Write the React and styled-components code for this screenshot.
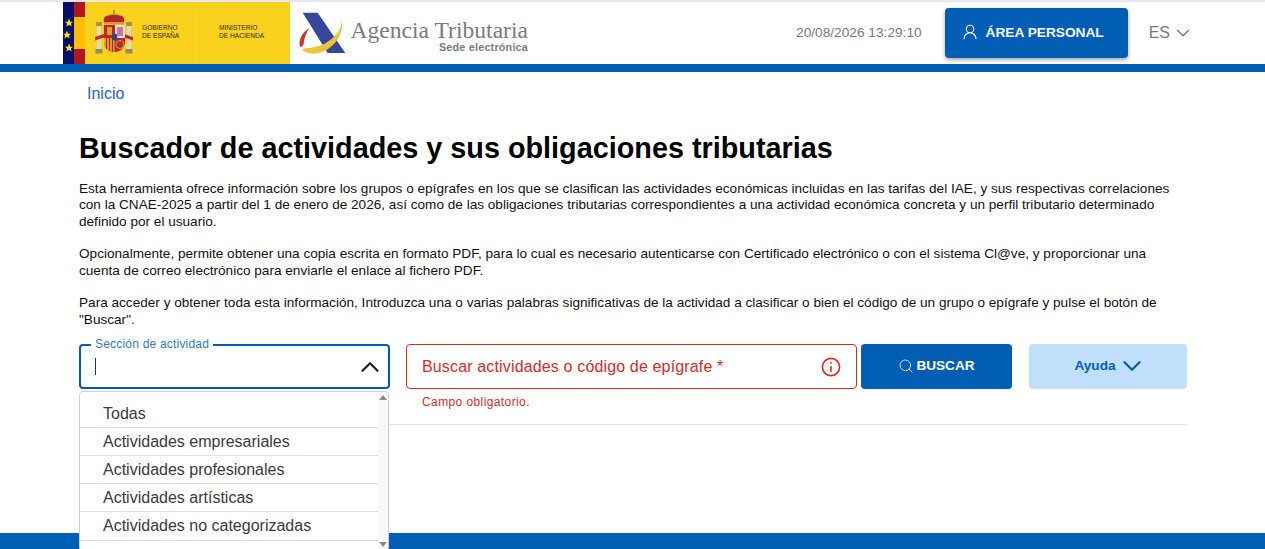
import React from "react";
import styled, { createGlobalStyle } from "styled-components";
import { ChevronDown, ChevronUp, Search, UserRound } from "lucide-react";

const blue = "#005eb5";
const red = "#d92b24";

const GlobalStyle = createGlobalStyle`
  html, body {
    margin: 0;
    padding: 0;
    background: #fff;
    font-family: "Liberation Sans", Arial, sans-serif;
  }
  * { box-sizing: border-box; }
`;

const Page = styled.div`
  height: 549px;
  display: flex;
  flex-direction: column;
  overflow: hidden;
  border-top: 2px solid #eee6ee;
`;
const Header = styled.header`
  height: 70px;
  flex: none;
  display: flex;
  align-items: stretch;
  padding-left: 63px;
  border-bottom: 8px solid ${blue};
`;
const Banner = styled.div`
  width: 227px;
  display: flex;
  background: #f8d21c;
`;
const FlagStrip = styled.svg`
  width: 22px;
  height: 62px;
  flex: none;
`;
const Coat = styled.svg`
  width: 40px;
  height: 44px;
  flex: none;
  margin: 8px 0 0 10px;
`;
const BannerText = styled.div`
  font-size: 6.6px;
  line-height: 8px;
  color: #2f2a10;
  margin-top: 22px;
  margin-left: ${({ $left }) => $left}px;
  width: ${({ $width }) => $width}px;
  flex: none;
`;
const Divider = styled.div`
  width: 1px;
  background: #f3cc28;
  flex: none;
`;
const AgencyMark = styled.svg`
  width: 50px;
  height: 46px;
  flex: none;
  margin: 9px 0 0 8px;
`;
const AgencyText = styled.div`
  margin: 16px 0 0 0;
  width: 180px;
  display: flex;
  flex-direction: column;
  align-items: flex-end;
  color: #7b7b7b;
`;
const AgencyName = styled.div`
  font-family: "Liberation Serif", serif;
  font-size: 23.6px;
  line-height: 24px;
  white-space: nowrap;
`;
const AgencySub = styled.div`
  font-size: 10.8px;
  font-weight: 700;
  line-height: 11px;
  letter-spacing: 0.2px;
  white-space: nowrap;
`;
const Tools = styled.div`
  margin-left: auto;
  display: flex;
  align-items: flex-start;
  padding-right: 71px;
`;
const Clock = styled.div`
  font-size: 13.7px;
  color: #7a7a7a;
  margin-top: 23px;
  margin-right: 23px;
`;
const AreaButton = styled.button`
  width: 183px;
  height: 50px;
  margin-top: 6px;
  display: flex;
  align-items: center;
  justify-content: center;
  gap: 7px;
  padding: 0 8px 2px 0;
  border: none;
  border-radius: 4px;
  background: ${blue};
  color: #fff;
  font: 700 13.7px "Liberation Sans", Arial, sans-serif;
  box-shadow: 0 2px 4px rgba(0, 0, 0, 0.35);
`;
const Lang = styled.div`
  display: flex;
  align-items: center;
  gap: 2px;
  margin: 20px 0 0 21px;
  font-size: 16px;
  color: #757b82;
`;
const Main = styled.main`
  flex: 1;
  min-height: 0;
  padding: 0 78px 0 79px;
`;
const Crumb = styled.a`
  display: block;
  margin: 12px 0 0 8px;
  font-size: 16px;
  line-height: 19px;
  color: #1f62bd;
`;
const Title = styled.h1`
  margin: 27px 0 0;
  font-size: 28.8px;
  line-height: 36px;
  font-weight: 700;
  color: #000;
`;
const Intro = styled.div`
  margin-top: 15px;
  font-size: 13.6px;
  line-height: 16.32px;
  color: #111;
`;
const Para = styled.p`
  margin: 0 0 16.32px;
`;
const FormRow = styled.div`
  display: flex;
  align-items: flex-start;
  margin-top: 9px;
`;
const SelectWrap = styled.div`
  position: relative;
  width: 311px;
  margin-right: 16px;
  flex: none;
`;
const SelectBox = styled.div`
  height: 45px;
  border: 2px solid ${blue};
  border-radius: 4px;
  display: flex;
  align-items: center;
  justify-content: space-between;
  padding: 0 3px 0 14px;
`;
const Caret = styled.span`
  width: 1px;
  height: 17px;
  background: #123a66;
`;
const Legend = styled.span`
  position: absolute;
  top: -7px;
  left: 12px;
  padding: 0 4px;
  background: #fff;
  font-size: 12px;
  line-height: 14px;
  letter-spacing: 0.2px;
  color: #2f7cc4;
`;
const Menu = styled.ul`
  position: absolute;
  top: 47px;
  left: 0;
  width: 310px;
  height: 160px;
  margin: 0;
  padding: 7.6px 10px 0 0;
  list-style: none;
  background: #fff;
  border: 1px solid #d0d0d4;
  border-radius: 4px;
  z-index: 2;
  overflow: hidden;
`;
const MenuItem = styled.li`
  height: 28.2px;
  padding-left: 23px;
  font-size: 16px;
  line-height: 27px;
  color: #3a3a3a;
  border-bottom: 1px solid #dcdce0;
  white-space: nowrap;
`;
const ScrollTrack = styled.div`
  position: absolute;
  top: 0;
  right: 0;
  bottom: 0;
  width: 10px;
  background: #f8f8f8;
`;
const ScrollArrow = styled.span`
  position: absolute;
  left: 1px;
  ${({ $down }) => ($down ? "bottom: 3px;" : "top: 3px;")}
  border-left: 4px solid transparent;
  border-right: 4px solid transparent;
  ${({ $down }) =>
    $down ? "border-top: 5px solid #8a8a8a;" : "border-bottom: 5px solid #8a8a8a;"}
`;
const SearchCol = styled.div`
  width: 451px;
  margin-right: 4px;
  flex: none;
`;
const SearchBox = styled.div`
  height: 45px;
  border: 1px solid ${red};
  border-radius: 4px;
  display: flex;
  align-items: center;
  justify-content: space-between;
  padding: 0 15px;
  font-size: 16px;
  letter-spacing: 0.15px;
  color: ${red};
`;
const ErrorText = styled.div`
  margin: 6px 0 0 16px;
  font-size: 12px;
  line-height: 14px;
  letter-spacing: 0.4px;
  color: ${red};
`;
const Btn = styled.button`
  width: ${({ $w }) => $w}px;
  height: 45px;
  flex: none;
  display: flex;
  align-items: center;
  justify-content: center;
  gap: ${({ $gap }) => $gap}px;
  padding: 0 0 2px ${({ $pl }) => $pl || 0}px;
  border: none;
  border-radius: 4px;
  background: ${({ $light }) => ($light ? "#c0dffb" : blue)};
  color: ${({ $light }) => ($light ? blue : "#fff")};
  font: 700 13.6px "Liberation Sans", Arial, sans-serif;
  margin-left: ${({ $ml }) => $ml || 0}px;
`;
const Rule = styled.hr`
  margin: 15px 0 0;
  border: none;
  border-top: 1px solid #e2e2e2;
`;
const Footer = styled.footer`
  height: 16px;
  flex: none;
  background: ${blue};
`;

const Star = ({ x, y }) => (
  <polygon
    fill="#ffe11a"
    transform={`translate(${x} ${y}) scale(4.4)`}
    points="0,-1 0.29,-0.31 0.95,-0.31 0.43,0.13 0.59,0.81 0,0.42 -0.59,0.81 -0.43,0.13 -0.95,-0.31 -0.29,-0.31"
  />
);

const Flag = () => (
  <FlagStrip viewBox="0 0 22 62">
    <rect width="11" height="62" fill="#0a0f6a" />
    <rect x="11" width="11" height="62" fill="#b5161c" />
    <rect x="11" y="15" width="11" height="32" fill="#fdbd00" />
    <Star x={6} y={21} />
    <Star x={4} y={33} />
    <Star x={6} y={46} />
  </FlagStrip>
);

const CoatOfArms = () => (
  <Coat viewBox="0 0 40 44">
    {/* crown */}
    <path d="M9 12C7 6 14 4 19 5c5-1 12 1 10 7l-1 2H10z" fill="#b3242a" />
    <path d="M18 0h2v5h-2z" fill="#b08a25" />
    <path d="M12 6c2-2 12-2 14 0" stroke="#c9a227" strokeWidth="1.2" fill="none" />
    <rect x="9" y="12" width="20" height="2.4" fill="#c9a227" />
    {/* columns */}
    <rect x="2" y="16" width="4" height="23" fill="#dfd9c8" />
    <rect x="32" y="16" width="4" height="23" fill="#dfd9c8" />
    <rect x="1" y="12" width="6" height="4" fill="#b09235" />
    <rect x="31" y="12" width="6" height="4" fill="#b09235" />
    <rect x="0.5" y="39" width="7" height="4.5" fill="#8f8d66" />
    <rect x="30.5" y="39" width="7" height="4.5" fill="#8f8d66" />
    <path d="M0 27l9-3v3.6l-9 3zM38 27l-9-3v3.6l9 3z" fill="#c22a2a" />
    {/* shield */}
    <path d="M9 15h21v17c0 6-5 10-10.500 10S9 38 9 32z" fill="#c4222a" />
    <rect x="20" y="15" width="10" height="13" fill="#e9dfe2" />
    <path d="M22 17h6v9h-6z" fill="#c878a4" />
    <rect x="12" y="17" width="5" height="8" fill="#d8a71e" />
    <path d="M9 28h10.500v14C14 42 9 38 9 32z" fill="#e2b01e" />
    <path d="M11.500 28v11M14.500 28v13M17.500 28v14" stroke="#b3242a" strokeWidth="1.3" />
    <circle cx="25" cy="34.500" r="4" fill="#a8323a" stroke="#d9a92a" strokeWidth="0.9" />
    <ellipse cx="19.500" cy="27" rx="2.800" ry="3.400" fill="#254a9a" />
  </Coat>
);

const AgencyLogo = () => (
  <AgencyMark viewBox="0 0 50 46">
    <path d="M4.700 1.700h15L47.300 42H29.700z" fill="#35469b" />
    <path d="M2 35.500C0 28 5 21 11.300 17 8 22 6 28 5.500 33.500 5 35 3 36.500 2 35.500z" fill="#c8372a" />
    <path
      d="M43 8.700C46 20 30 34 16 36.300c-5 .7-9 1-12 2 4 4 10 5 16 3.700C33 40 48 24 43 8.700z"
      fill="#efc23c"
    />
  </AgencyMark>
);

const InfoIcon = () => (
  <svg width="20" height="20" viewBox="0 0 20 20" fill="none" stroke={red}>
    <circle cx="10" cy="10" r="8.6" strokeWidth="1.6" />
    <path d="M10 9v6" strokeWidth="1.6" />
    <circle cx="10" cy="5.800" r="0.6" fill={red} strokeWidth="0.8" />
  </svg>
);

const ITEMS = [
  "Todas",
  "Actividades empresariales",
  "Actividades profesionales",
  "Actividades artísticas",
  "Actividades no categorizadas",
];

export default function App() {
  return (
    <>
      <GlobalStyle />
      <Page>
        <Header>
          <Banner>
            <Flag />
            <CoatOfArms />
            <BannerText $left={7} $width={57}>
              GOBIERNO
              <br />
              DE ESPAÑA
            </BannerText>
            <Divider />
            <BannerText $left={19} $width={60}>
              MINISTERIO
              <br />
              DE HACIENDA
            </BannerText>
          </Banner>
          <AgencyLogo />
          <AgencyText>
            <AgencyName>Agencia Tributaria</AgencyName>
            <AgencySub>Sede electrónica</AgencySub>
          </AgencyText>
          <Tools>
            <Clock>20/08/2026 13:29:10</Clock>
            <AreaButton>
              <UserRound size={18} strokeWidth={1.5} />
              ÁREA PERSONAL
            </AreaButton>
            <Lang>
              ES
              <ChevronDown size={22} strokeWidth={1.5} />
            </Lang>
          </Tools>
        </Header>
        <Main>
          <Crumb>Inicio</Crumb>
          <Title>Buscador de actividades y sus obligaciones tributarias</Title>
          <Intro>
            <Para>
              Esta herramienta ofrece información sobre los grupos o epígrafes en los que se clasifican las
              actividades económicas incluidas en las tarifas del IAE, y sus respectivas correlaciones
              <br />
              con la CNAE-2025 a partir del 1 de enero de 2026, así como de las obligaciones tributarias
              correspondientes a una actividad económica concreta y un perfil tributario determinado
              <br />
              definido por el usuario.
            </Para>
            <Para>
              Opcionalmente, permite obtener una copia escrita en formato PDF, para lo cual es necesario
              autenticarse con Certificado electrónico o con el sistema Cl@ve, y proporcionar una
              <br />
              cuenta de correo electrónico para enviarle el enlace al fichero PDF.
            </Para>
            <Para>
              Para acceder y obtener toda esta información, Introduzca una o varias palabras significativas
              de la actividad a clasificar o bien el código de un grupo o epígrafe y pulse el botón de
              <br />
              "Buscar".
            </Para>
          </Intro>
          <FormRow>
            <SelectWrap>
              <Legend>Sección de actividad</Legend>
              <SelectBox>
                <Caret />
                <ChevronUp size={30} strokeWidth={1.8} color="#222" />
              </SelectBox>
              <Menu>
                {ITEMS.map((item) => (
                  <MenuItem key={item}>{item}</MenuItem>
                ))}
                <ScrollTrack>
                  <ScrollArrow />
                  <ScrollArrow $down />
                </ScrollTrack>
              </Menu>
            </SelectWrap>
            <SearchCol>
              <SearchBox>
                Buscar actividades o código de epígrafe *
                <InfoIcon />
              </SearchBox>
              <ErrorText>Campo obligatorio.</ErrorText>
            </SearchCol>
            <Btn $w={151} $gap={2}>
              <Search size={16} strokeWidth={1.2} />
              BUSCAR
            </Btn>
            <Btn $w={158} $gap={1} $pl={5} $ml={17} $light>
              Ayuda
              <ChevronDown size={30} strokeWidth={1.8} />
            </Btn>
          </FormRow>
          <Rule />
        </Main>
        <Footer />
      </Page>
    </>
  );
}
